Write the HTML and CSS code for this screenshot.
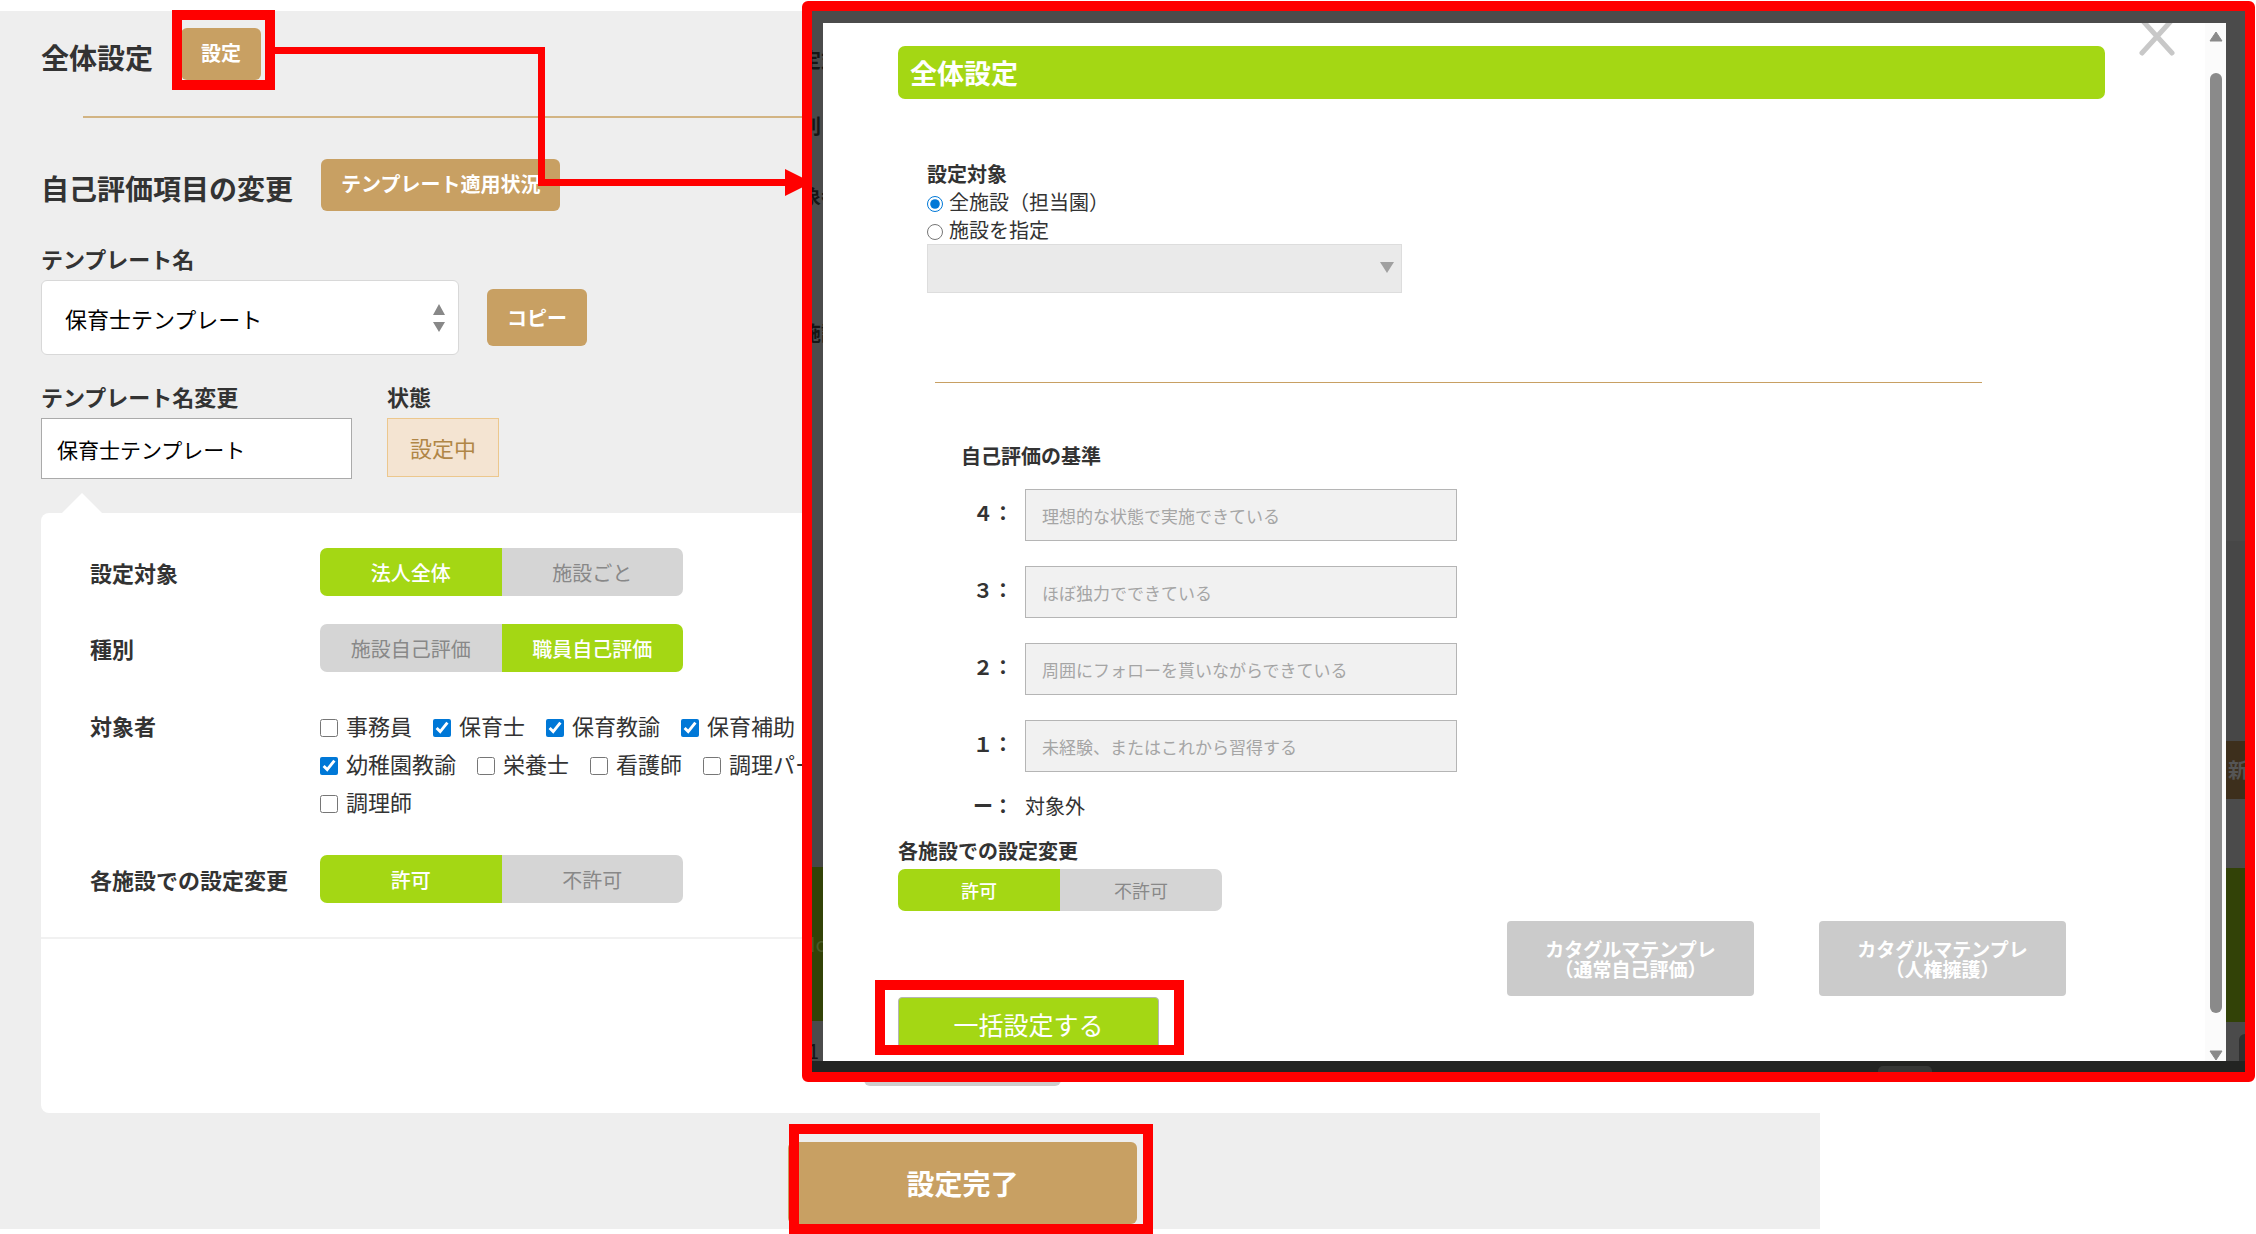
FILE: index.html
```html
<!DOCTYPE html>
<html lang="ja">
  <head>
    <meta charset="UTF-8" />
    <meta name="viewport" content="width=device-width, initial-scale=1.0" />
    <title>自己評価項目の変更</title>
    <link rel="stylesheet" href="styles.css">
  </head>
  <body>
    <main class="page">
      <div class="page-head">
        <h2>全体設定</h2>
        <div class="marked mark-open">
          <button type="button" class="btn">設定</button>
        </div>
      </div>
      <hr class="page-line" />

      <div class="page-head">
        <h2>自己評価項目の変更</h2>
        <button type="button" class="btn">テンプレート適用状況</button>
      </div>

      <div class="field field-template">
        <label for="template">テンプレート名</label>
        <div class="template-row">
          <div class="select-box">
            <select id="template">
              <option>保育士テンプレート</option>
            </select>
            <svg class="sort-icon" viewBox="0 0 12 28" aria-hidden="true">
              <path d="M6 0L12 11H0zM6 28L0 18H12z" />
            </svg>
          </div>
          <button type="button" class="btn btn-copy">コピー</button>
        </div>
      </div>

      <div class="name-row">
        <div class="field">
          <label for="templateName">テンプレート名変更</label>
          <input type="text" id="templateName" class="name-input" value="保育士テンプレート" />
        </div>
        <div class="field">
          <span class="field-title">状態</span>
          <span class="status">設定中</span>
        </div>
      </div>

      <section class="panel">
        <div class="panel-body">
          <div class="row">
            <span class="row-label">設定対象</span>
            <div class="toggle">
              <button type="button" class="on">法人全体</button>
              <button type="button">施設ごと</button>
            </div>
          </div>
          <div class="row">
            <span class="row-label">種別</span>
            <div class="toggle">
              <button type="button">施設自己評価</button>
              <button type="button" class="on">職員自己評価</button>
            </div>
          </div>
          <div class="row row-people">
            <span class="row-label">対象者</span>
            <div class="people">
              <label><input type="checkbox" name="job" /> 事務員</label>
              <label><input type="checkbox" name="job" checked /> 保育士</label>
              <label><input type="checkbox" name="job" checked /> 保育教諭</label>
              <label><input type="checkbox" name="job" checked /> 保育補助</label>
              <label><input type="checkbox" name="job" checked /> 幼稚園教諭</label>
              <label><input type="checkbox" name="job" /> 栄養士</label>
              <label><input type="checkbox" name="job" /> 看護師</label>
              <label><input type="checkbox" name="job" /> 調理パート</label>
              <label><input type="checkbox" name="job" /> 調理師</label>
            </div>
          </div>
          <div class="row">
            <span class="row-label">各施設での設定変更</span>
            <div class="toggle">
              <button type="button" class="on">許可</button>
              <button type="button">不許可</button>
            </div>
          </div>
        </div>
        <div class="panel-foot">
          <button type="button" class="btn-back" aria-label="戻る"></button>
        </div>
      </section>

      <div class="page-foot">
        <div class="marked mark-done">
          <button type="button" class="btn btn-done">設定完了</button>
        </div>
      </div>
    </main>

    <div class="modal-frame">
      <div class="backdrop">
        <!-- dimmed page left of the dialog -->
        <div class="strip strip-left" aria-hidden="true">
          <div class="s-target">定対</div>
          <div class="s-kind">別</div>
          <div class="s-people">象者</div>
          <div class="s-change">施設</div>
          <div class="s-gap"></div>
          <div class="s-panel"></div>
          <div class="s-green">No</div>
          <div class="s-num">1</div>
        </div>

        <div class="dialog" role="dialog" aria-labelledby="dialogTitle">
          <div class="dialog-body">
            <h3 class="dialog-title" id="dialogTitle">全体設定</h3>

            <fieldset class="target">
              <legend>設定対象</legend>
              <label><input type="radio" name="target" checked /> 全施設（担当園）</label>
              <label><input type="radio" name="target" /> 施設を指定</label>
              <div class="facility">
                <select aria-label="施設" disabled>
                  <option></option>
                </select>
                <svg class="down-icon" viewBox="0 0 14 11" aria-hidden="true">
                  <path d="M0 0H14L7 11z" />
                </svg>
              </div>
            </fieldset>

            <hr class="dialog-line" />

            <h4 class="scale-title">自己評価の基準</h4>
            <div class="scale">
              <label for="scale4">４：</label>
              <input type="text" id="scale4" placeholder="理想的な状態で実施できている" disabled />
              <label for="scale3">３：</label>
              <input type="text" id="scale3" placeholder="ほぼ独力でできている" disabled />
              <label for="scale2">２：</label>
              <input type="text" id="scale2" placeholder="周囲にフォローを貰いながらできている" disabled />
              <label for="scale1">１：</label>
              <input type="text" id="scale1" placeholder="未経験、またはこれから習得する" disabled />
            </div>
            <div class="scale-none"><b>ー：</b><span>対象外</span></div>

            <h4 class="change-title">各施設での設定変更</h4>
            <div class="toggle toggle-small">
              <button type="button" class="on">許可</button>
              <button type="button">不許可</button>
            </div>

            <div class="presets">
              <button type="button">カタグルマテンプレ<br />（通常自己評価）</button>
              <button type="button">カタグルマテンプレ<br />（人権擁護）</button>
            </div>

            <div class="marked mark-apply">
              <button type="button" class="btn-apply">一括設定する</button>
            </div>
          </div>

          <button type="button" class="close" aria-label="閉じる">
            <svg viewBox="0 0 40 34" aria-hidden="true">
              <path d="M5 -3L35 30M35 -3L5 30" />
            </svg>
          </button>

          <div class="scrollbar" aria-hidden="true">
            <svg viewBox="0 0 14 11"><path d="M7 1L13 10H1z" /></svg>
            <div class="thumb"></div>
            <svg viewBox="0 0 14 11"><path d="M1 1H13L7 10z" /></svg>
          </div>
        </div>

        <!-- dimmed page right of the dialog -->
        <div class="strip strip-right" aria-hidden="true">
          <div class="s-top"></div>
          <div class="s-panel-top"></div>
          <div class="s-new">新</div>
          <div class="s-panel-end"></div>
          <div class="s-green"></div>
          <div class="s-tab"></div>
        </div>
      </div>
      <div class="taskbar"><span></span></div>
    </div>

    <!-- arrow from the button to the dialog -->
    <svg class="arrow" viewBox="0 0 538 150" aria-hidden="true">
      <path class="arrow-line" d="M0 3.5H267.5V135.5H515" />
      <path class="arrow-head" d="M511 122L538 135.5L511 149z" />
    </svg>
  </body>
</html>
```
FILE: styles.css
```css
* {
  box-sizing: border-box;
}

body {
  margin: 0;
  position: relative;
  min-height: 100vh;
  padding-top: 11px;
  background: #fff;
  color: #333;
  font-family: "Noto Sans CJK JP", "Noto Sans", sans-serif;
  font-size: 22px;
}

button,
input,
select {
  font-family: inherit;
}

button {
  border: none;
  padding: 0;
  cursor: pointer;
}

h2,
h3,
h4,
hr {
  margin: 0;
  border: none;
}

/* page */
.page {
  max-width: 1820px;
  padding: 17px 0 5px 41px;
  background: #eee;
}

.page-head {
  display: flex;
  align-items: flex-start;
  gap: 28px;
}

.page-head h2 {
  font-size: 28px;
  line-height: 58px;
}

.btn {
  display: block;
  height: 52px;
  padding: 0 20px 4px;
  border-radius: 6px;
  background: #c8a063;
  color: #fff;
  font-size: 20px;
  font-weight: bold;
}

.page-line {
  height: 2px;
  margin: 30px 0 41px 42px;
  background: #d2b483;
}

.field label,
.field-title {
  display: block;
  margin-bottom: 8px;
  line-height: 28px;
  font-weight: bold;
}

.field-template {
  margin-top: 27px;
}

.template-row {
  display: flex;
  align-items: center;
  gap: 28px;
}

.select-box {
  position: relative;
}

.select-box select {
  display: block;
  width: 418px;
  height: 75px;
  padding: 0 23px;
  appearance: none;
  border: 1px solid #d8d8d8;
  border-radius: 6px;
  background: #fff;
  color: #000;
  font-size: 22px;
}

.sort-icon {
  position: absolute;
  top: 24px;
  right: 14px;
  width: 12px;
  height: 28px;
  fill: #888;
  pointer-events: none;
}

.btn-copy {
  height: 57px;
  padding-bottom: 0;
}

.name-row {
  display: flex;
  gap: 35px;
  margin-top: 27px;
}

.name-input {
  display: block;
  width: 311px;
  height: 61px;
  padding: 0 15px;
  border: 1px solid #aaa;
  color: #000;
  font-size: 21px;
}

.status {
  display: block;
  padding: 0 22px;
  border: 1px solid #ecc78d;
  background: #f4e4d2;
  color: #b08646;
  line-height: 57px;
}

.panel {
  position: relative;
  margin-top: 34px;
  border-radius: 8px 0 0 8px;
  background: #fff;
}

.panel::before {
  content: "";
  position: absolute;
  top: -20px;
  left: 21px;
  border: 20px solid transparent;
  border-top: none;
  border-bottom-color: #fff;
}

.panel-body {
  display: grid;
  gap: 28px;
  padding: 35px 49px 34px;
  border-bottom: 2px solid #f1f1f1;
}

.row {
  display: grid;
  grid-template-columns: 230px 1fr;
}

.row-label {
  font-weight: bold;
  line-height: 49px;
  height: 48px;
}

.row-people {
  margin: 6px 0 7px;
}

.row-people .row-label {
  line-height: 38px;
}

.toggle {
  display: flex;
  width: 363px;
  height: 48px;
  border-radius: 7px;
  overflow: hidden;
}

.toggle button {
  flex: 1;
  background: #d5d5d5;
  color: #888;
  font-size: 20px;
}

.toggle .on {
  background: #a4d714;
  color: #fff;
  font-weight: 500;
}

.people {
  display: flex;
  flex-wrap: wrap;
  column-gap: 21px;
  max-width: 530px;
}

.people label {
  display: flex;
  align-items: center;
  gap: 8px;
  line-height: 38px;
}

.people input {
  width: 18px;
  height: 18px;
  margin: 6px 0 0;
  accent-color: #0078d7;
}

.panel-foot {
  padding: 94px 0 27px 823px;
}

.btn-back {
  display: block;
  width: 197px;
  height: 53px;
  border-radius: 6px;
  background: #ccc;
}

.page-foot {
  display: flex;
  padding: 29px 0 0 747px;
}

.btn-done {
  width: 349px;
  height: 82px;
  padding-bottom: 0;
  font-size: 28px;
}

/* red boxes round the buttons to press */
.marked {
  position: relative;
}

.marked::after {
  content: "";
  position: absolute;
  border: 10px solid #f00;
  pointer-events: none;
}

.mark-open::after {
  inset: -18px -14px -10px -9px;
}

.mark-done::after {
  inset: -18px -16px -10px 1px;
}

.mark-apply::after {
  inset: -17px -25px 0 -23px;
}

.arrow {
  position: absolute;
  top: 47px;
  left: 274px;
  width: 538px;
  height: 150px;
  pointer-events: none;
}

.arrow-line {
  fill: none;
  stroke: #f00;
  stroke-width: 7;
}

.arrow-head {
  fill: #f00;
}

/* dialog */
.modal-frame {
  position: absolute;
  top: 1px;
  left: 802px;
  right: 1px;
  border: 10px solid #f00;
  border-radius: 6px;
  background: #4b4b4b;
  font-size: 20px;
}

.backdrop {
  display: grid;
  grid-template-columns: 11px 1fr 19px;
}

.strip {
  display: flex;
  flex-direction: column;
  overflow: hidden;
  color: #161616;
  font-weight: bold;
  white-space: nowrap;
}

.strip div {
  text-indent: -11px;
}

.s-target {
  line-height: 98px;
}

.s-kind {
  line-height: 34px;
}

.s-people {
  line-height: 106px;
}

.s-change {
  line-height: 168px;
}

.strip .s-gap {
  height: 123px;
}

.strip .s-panel {
  height: 327px;
  background: #474747;
}

.strip .s-green {
  height: 154px;
  background: #324207;
  color: #4b5a28;
  font-weight: normal;
  line-height: 154px;
}

.strip .s-num {
  padding-top: 20px;
  text-indent: -4px;
  font-weight: normal;
  line-height: 20px;
}

.strip .s-top {
  height: 530px;
}

.strip .s-panel-top {
  height: 200px;
  background: #474747;
}

.strip .s-new {
  background: #3d2f1c;
  color: #555;
  text-indent: 2px;
  line-height: 58px;
}

.strip .s-panel-end {
  height: 69px;
}

.strip .s-tab {
  flex: 1;
  margin: 12px 0 0 13px;
  border-radius: 6px 0 0 0;
  background: #303030;
}

.dialog {
  position: relative;
  display: flex;
  margin-top: 12px;
  background: #fff;
}

.dialog-body {
  flex: 1;
  padding: 23px 100px 6px 75px;
}

.dialog-title {
  padding-left: 12px;
  border-radius: 7px;
  background: #a4d714;
  color: #fff;
  font-size: 27px;
  line-height: 53px;
}

.target {
  margin: 61px 0 0 29px;
  padding: 0;
  border: none;
  line-height: 28px;
}

.target legend {
  padding: 0;
  font-weight: bold;
}

.target label {
  display: flex;
  align-items: center;
  gap: 6px;
}

.target input {
  width: 16px;
  height: 16px;
  margin: 4px 0 0;
  accent-color: #0078d7;
}

.facility {
  position: relative;
  width: 475px;
}

.facility select {
  display: block;
  width: 100%;
  height: 49px;
  appearance: none;
  border: 1px solid #ddd;
  border-radius: 0;
  background: #eaeaea;
  opacity: 1;
}

.down-icon {
  position: absolute;
  top: 18px;
  right: 8px;
  width: 14px;
  height: 11px;
  fill: #a0a0a0;
}

.dialog-line {
  height: 1px;
  margin: 89px 123px 59px 37px;
  background: #c8a063;
}

.scale-title,
.change-title {
  font-size: 20px;
  line-height: 28px;
}

.scale-title {
  margin-left: 63px;
}

.scale {
  display: grid;
  grid-template-columns: 52px 432px;
  row-gap: 25px;
  margin: 19px 0 20px 75px;
}

.scale label {
  font-weight: bold;
  line-height: 47px;
}

.scale input {
  height: 52px;
  padding: 0 16px;
  border: 1px solid #b5b5b5;
  background: #f1f1f1;
  font-size: 17px;
}

.scale input::placeholder {
  color: #a5a5a5;
}

.scale-none {
  display: grid;
  grid-template-columns: 52px 1fr;
  margin: 0 0 17px 75px;
  line-height: 28px;
}

.toggle-small {
  width: 324px;
  height: 42px;
  margin-top: 4px;
}

.toggle-small button {
  padding-bottom: 1px;
  font-size: 18px;
}

.presets {
  display: flex;
  justify-content: flex-end;
  gap: 65px;
  margin: 10px 39px 1px 0;
}

.presets button {
  width: 247px;
  height: 75px;
  border-radius: 4px;
  background: #cbcbcb;
  color: #fff;
  font-size: 19px;
  font-weight: bold;
  line-height: 20px;
}

.mark-apply {
  width: 261px;
}

.btn-apply {
  display: block;
  width: 100%;
  height: 58px;
  padding-bottom: 4px;
  border: 1px solid #b5b5b5;
  border-radius: 4px;
  background: #a4d714;
  color: #fff;
  font-size: 25px;
}

.close {
  position: absolute;
  top: 0;
  right: 49px;
  background: none;
}

.close svg {
  display: block;
  width: 40px;
  height: 34px;
  fill: none;
  stroke: #c8c8c8;
  stroke-width: 5;
  stroke-linecap: round;
}

.scrollbar {
  display: flex;
  flex-direction: column;
  align-items: center;
  width: 21px;
  padding-top: 8px;
  background: #fbfbfb;
}

.scrollbar svg {
  width: 14px;
  height: 11px;
  fill: #8a8a8a;
  stroke: #8a8a8a;
  stroke-linejoin: round;
}

.thumb {
  flex: 1;
  width: 12px;
  margin: 31px 0 37px;
  border-radius: 6px;
  background: #8a8a8a;
}

.taskbar {
  display: flex;
  align-items: flex-end;
  justify-content: flex-end;
  height: 11px;
  padding-right: 313px;
  background: #232422;
}

.taskbar span {
  width: 54px;
  height: 6px;
  border-radius: 5px 5px 0 0;
  background: #363735;
}
```
